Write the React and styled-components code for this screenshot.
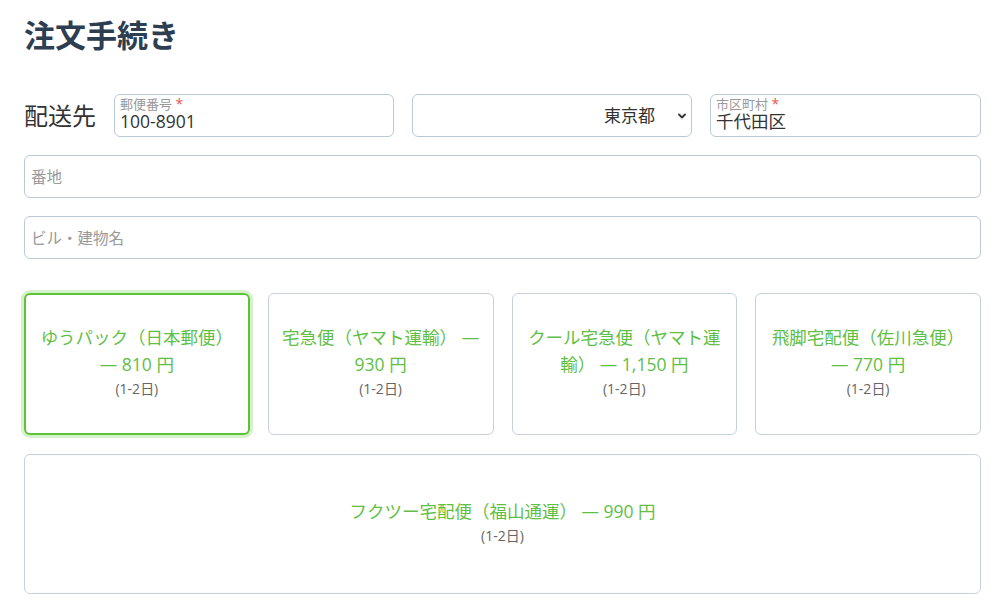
import * as React from "react";
import styled, { createGlobalStyle } from "styled-components";

const GlobalStyle = createGlobalStyle`
  body {
    margin: 0;
    background: #fff;
    font-family: "Open Sans", "Noto Sans CJK JP", sans-serif;
    color: #333;
  }
`;

const carriers = [
  { id: "yupack", name: "ゆうパック（日本郵便）", price: "810", days: "1-2" },
  { id: "yamato", name: "宅急便（ヤマト運輸）", price: "930", days: "1-2" },
  { id: "cool", name: "クール宅急便（ヤマト運輸）", price: "1,150", days: "1-2" },
  { id: "sagawa", name: "飛脚宅配便（佐川急便）", price: "770", days: "1-2" },
  { id: "fukutsu", name: "フクツー宅配便（福山通運）", price: "990", days: "1-2" },
];

export default function App() {
  const [selected, setSelected] = React.useState("yupack");

  return (
    <Page>
      <GlobalStyle />
      <Title>注文手続き</Title>

      <AddressRow>
        <SectionLabel>配送先</SectionLabel>
        <Field>
          <FloatLabel>郵便番号 <Req>*</Req></FloatLabel>
          <FieldInput defaultValue="100-8901" />
        </Field>
        <SelectBox>
          <Select defaultValue="tokyo">
            <option value="tokyo">東京都</option>
            <option value="osaka">大阪府</option>
          </Select>
          <Chevron viewBox="0 0 10 10">
            <path d="M2 3.5 L5 6.5 L8 3.5" fill="none" stroke="#333" strokeWidth="1.8" strokeLinecap="round" strokeLinejoin="round" />
          </Chevron>
        </SelectBox>
        <Field>
          <FloatLabel>市区町村 <Req>*</Req></FloatLabel>
          <FieldInput defaultValue="千代田区" />
        </Field>
      </AddressRow>

      <PlainInput placeholder="番地" />
      <PlainInput placeholder="ビル・建物名" />

      <CarrierGrid>
        {carriers.map((c, i) => (
          <CarrierCard
            key={c.id}
            $active={selected === c.id}
            $wide={i === carriers.length - 1}
            onClick={() => setSelected(c.id)}
          >
            <CarrierName>
              {c.name} — {c.price} 円
            </CarrierName>
            <CarrierDays>({c.days}日)</CarrierDays>
          </CarrierCard>
        ))}
      </CarrierGrid>
    </Page>
  );
}

const Page = styled.div`
  padding: 14px 19px 0 24px;
  display: flex;
  flex-direction: column;
`;

const Title = styled.h1`
  margin: 0 0 38px;
  font-size: 31px;
  font-weight: 700;
  line-height: 42px;
  color: #2c3e50;
`;

const AddressRow = styled.div`
  display: grid;
  grid-template-columns: 72px 280px 280px 1fr;
  column-gap: 18px;
  align-items: center;
`;

const SectionLabel = styled.div`
  font-size: 24px;
  line-height: 30px;
  color: #333;
  white-space: nowrap;
`;

const boxBase = `
  box-sizing: border-box;
  height: 43px;
  border: 1px solid #b9c9d8;
  border-radius: 6px;
  background: #fff;
`;

const Field = styled.label`
  ${boxBase}
  display: flex;
  flex-direction: column;
  justify-content: center;
  padding: 0 5px 2px;
`;

const FloatLabel = styled.span`
  font-size: 13px;
  line-height: 13px;
  color: #999;
`;

const Req = styled.span`
  color: #e5574e;
  font-size: 14px;
`;

const FieldInput = styled.input`
  border: 0;
  padding: 0;
  outline: none;
  font-family: inherit;
  font-size: 17.5px;
  line-height: 21px;
  color: #333;
  background: transparent;
`;

const SelectBox = styled.div`
  position: relative;
`;

const Select = styled.select`
  ${boxBase}
  width: 100%;
  appearance: none;
  padding: 0 36px 0 10px;
  text-align: right;
  text-align-last: right;
  font-family: inherit;
  font-size: 17px;
  color: #333;
  outline: none;
`;

const Chevron = styled.svg`
  position: absolute;
  right: 5px;
  top: 17px;
  width: 10px;
  height: 10px;
  pointer-events: none;
`;

const PlainInput = styled.input`
  ${boxBase}
  margin-top: 18px;
  padding: 0 6px;
  font-family: inherit;
  font-size: 15.5px;
  color: #333;
  outline: none;
  &::placeholder {
    color: #999;
  }
`;

const CarrierGrid = styled.div`
  margin-top: 34px;
  display: grid;
  grid-template-columns: repeat(4, 1fr);
  gap: 19px 18px;
`;

const CarrierCard = styled.button`
  box-sizing: border-box;
  grid-column: ${(p) => (p.$wide ? "1 / -1" : "auto")};
  height: ${(p) => (p.$wide ? "140px" : "142px")};
  display: flex;
  flex-direction: column;
  align-items: center;
  justify-content: center;
  padding: 0 12px;
  background: #fff;
  border: ${(p) => (p.$active ? "2px solid #5ec238" : "1px solid #c5d1dd")};
  border-radius: 6px;
  box-shadow: ${(p) => (p.$active ? "0 0 0 3px #d6f0cc" : "none")};
  font-family: inherit;
  cursor: pointer;
`;

const CarrierName = styled.div`
  font-size: 17.5px;
  line-height: 27px;
  color: #5fbf45;
  text-align: center;
`;

const CarrierDays = styled.div`
  margin: 1px 0 6px;
  font-size: 14px;
  line-height: 19px;
  color: #666;
`;
